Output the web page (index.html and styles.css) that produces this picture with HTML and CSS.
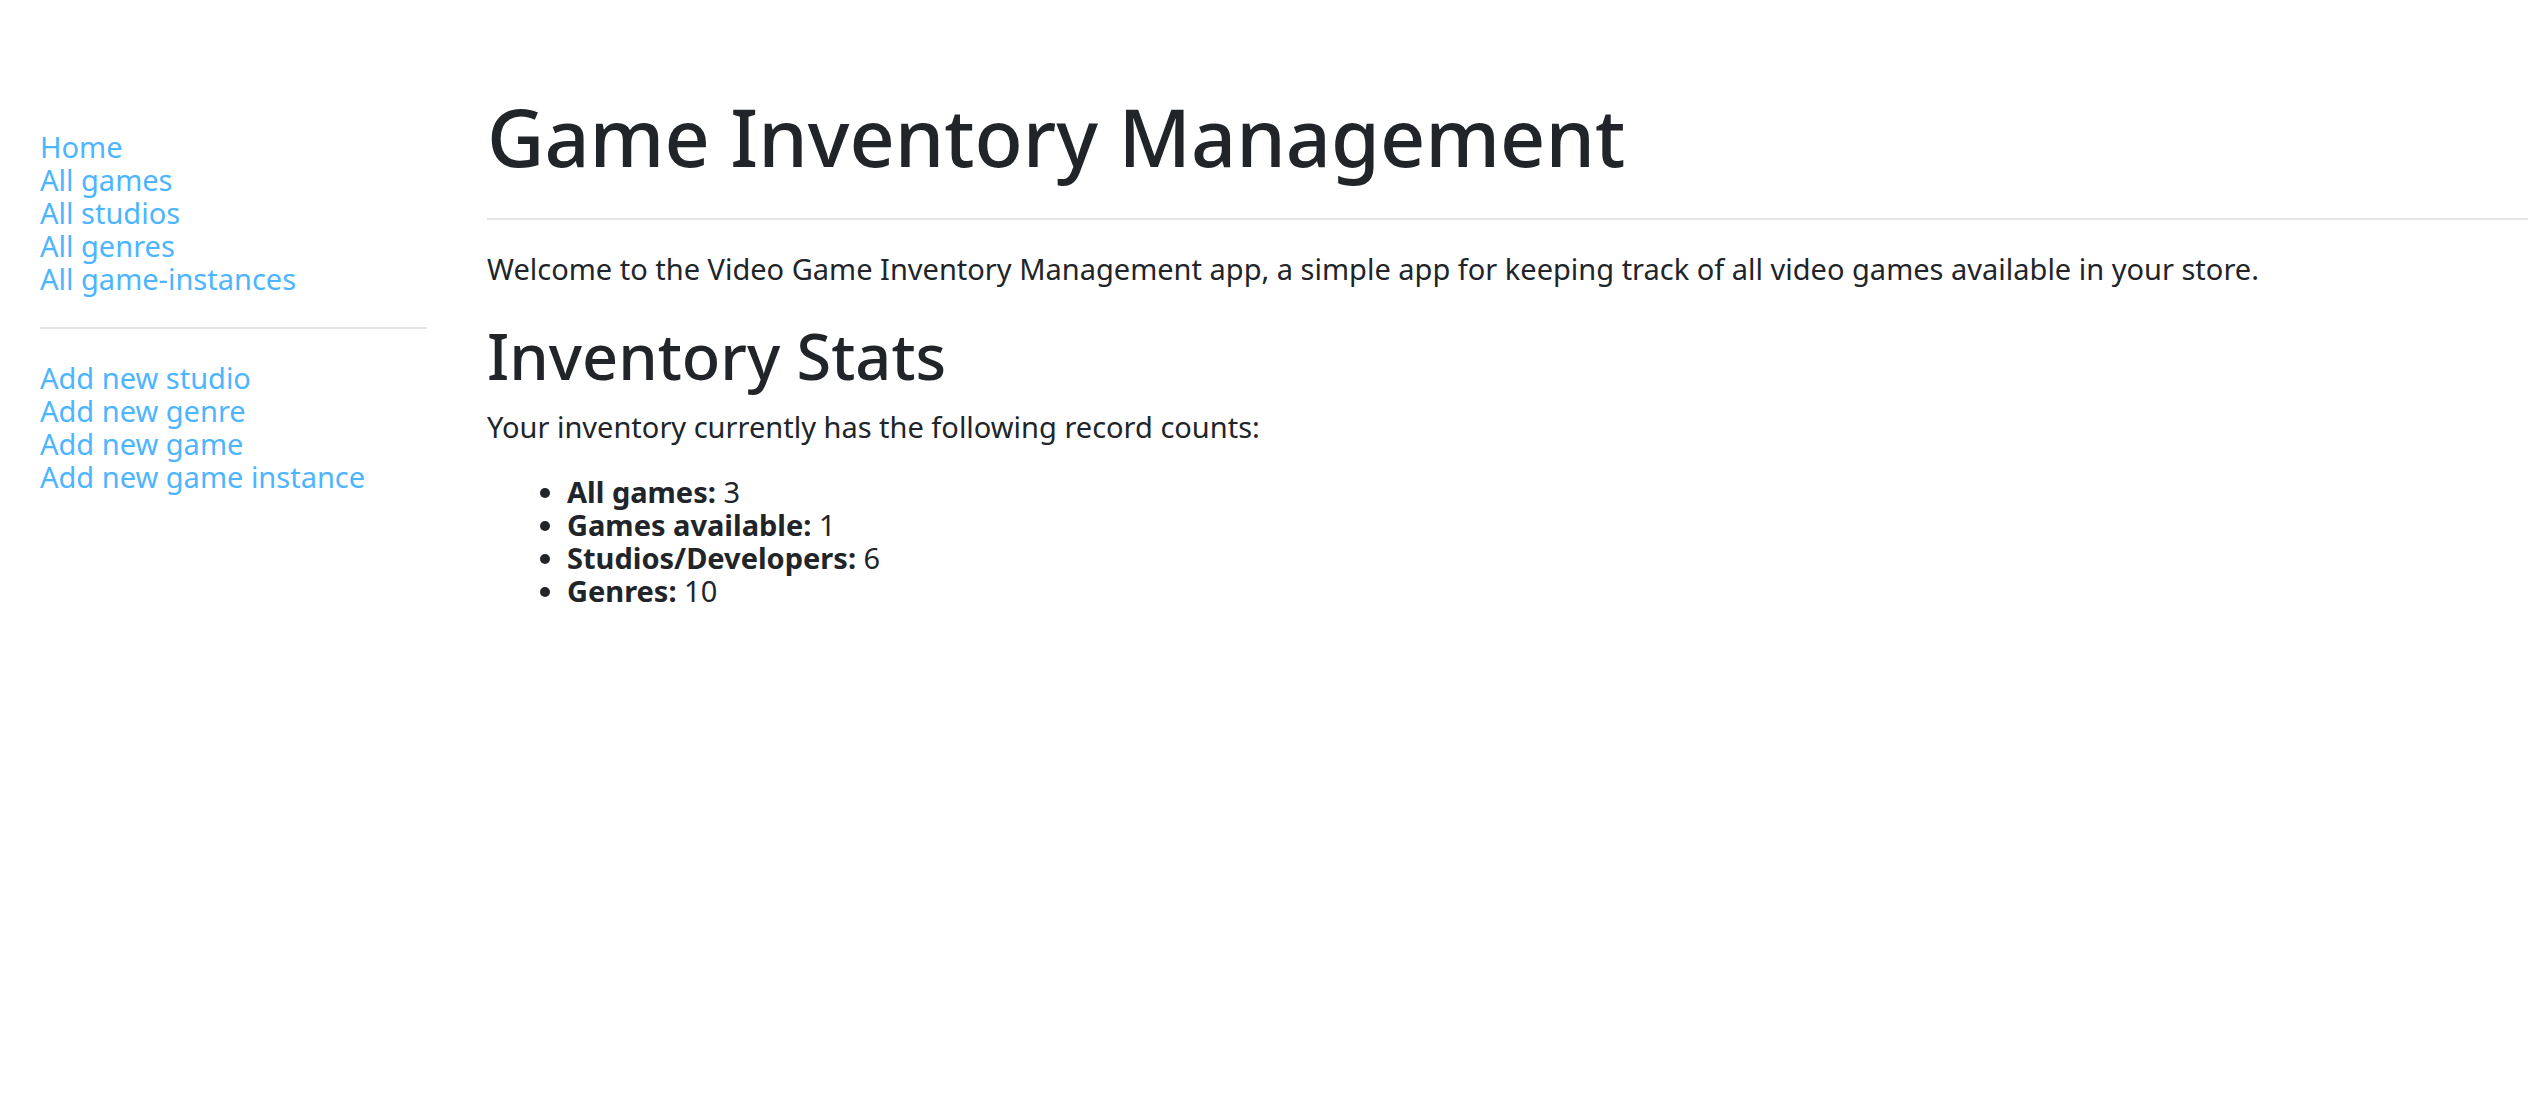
FILE: index.html
```html
<!DOCTYPE html>
<html lang="en">
<head>
<meta charset="utf-8">
<title>Game Inventory Management</title>
<link rel="stylesheet" href="styles.css">
</head>
<body>
<div class="layout">
  <nav class="sidebar">
    <ul class="nav-list">
      <li><a href="#">Home</a></li>
      <li><a href="#">All games</a></li>
      <li><a href="#">All studios</a></li>
      <li><a href="#">All genres</a></li>
      <li><a href="#">All game-instances</a></li>
    </ul>
    <hr class="rule">
    <ul class="nav-list">
      <li><a href="#">Add new studio</a></li>
      <li><a href="#">Add new genre</a></li>
      <li><a href="#">Add new game</a></li>
      <li><a href="#">Add new game instance</a></li>
    </ul>
  </nav>
  <main class="content">
    <h1>Game Inventory Management</h1>
    <hr class="rule">
    <p class="intro">Welcome to the Video Game Inventory Management app, a simple app for keeping track of all video games available in your store.</p>
    <h2>Inventory Stats</h2>
    <p>Your inventory currently has the following record counts:</p>
    <ul class="stats">
      <li><strong>All games:</strong> 3</li>
      <li><strong>Games available:</strong> 1</li>
      <li><strong>Studios/Developers:</strong> 6</li>
      <li><strong>Genres:</strong> 10</li>
    </ul>
  </main>
</div>
</body>
</html>
```
FILE: styles.css
```css
* {
  box-sizing: border-box;
}

body {
  margin: 0;
  background: #fff;
  color: #212529;
  font-family: "Lucida Grande", "Noto Sans", sans-serif;
  font-size: 29px;
  line-height: 33px;
}

.layout {
  display: flex;
}

.sidebar {
  flex: 0 0 427px;
  padding: 130px 0 0 40px;
}

.content {
  flex: 1;
  min-width: 0;
  padding: 88px 0 40px 60px;
}

.nav-list {
  margin: 0;
  padding: 0;
  list-style: none;
}

a {
  color: #4db5ff;
  text-decoration: none;
}

.rule {
  height: 2px;
  margin: 32px 0;
  border: 0;
  background: #e5e5e5;
}

h1,
h2 {
  margin: 0;
  font-weight: 500;
}

h1 {
  font-size: 79px;
  line-height: 98px;
}

h2 {
  margin-bottom: 16px;
  font-size: 63px;
  line-height: 77px;
}

p {
  margin: 0;
}

.intro {
  margin-bottom: 32px;
}

.stats {
  margin: 32px 0;
  padding-left: 80px;
}
```
